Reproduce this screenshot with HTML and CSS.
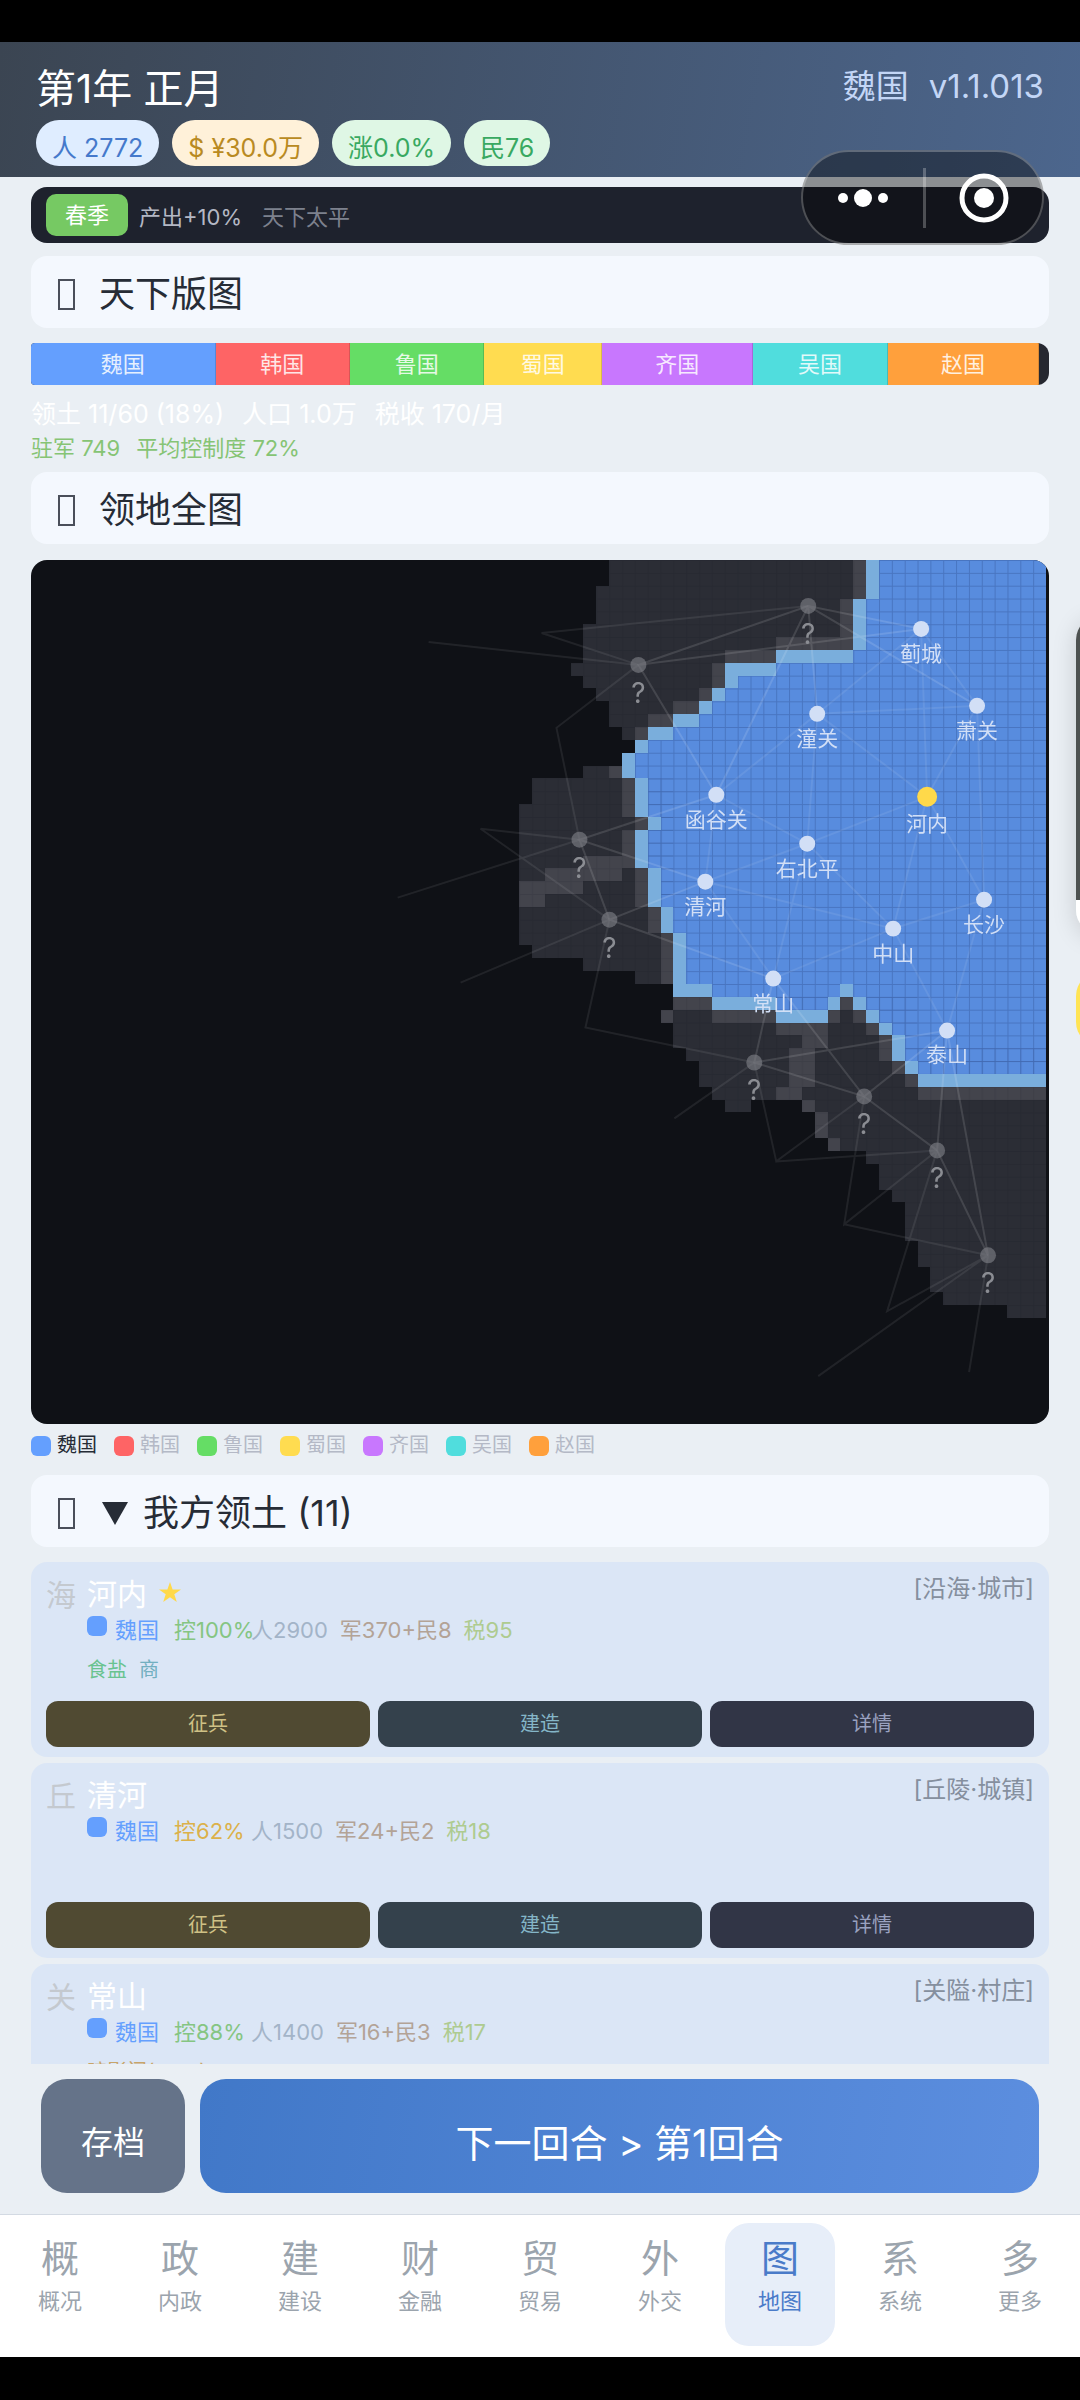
FILE: index.html
```html
<!DOCTYPE html>
<html lang="zh-CN">
<head>
<meta charset="utf-8">
<meta name="viewport" content="width=device-width, initial-scale=1">
<title>天下版图</title>
<link rel="stylesheet" href="styles.css">
</head>
<body>
<div class="app">
  <header class="topbar">
    <div class="topbar-row">
      <h1 class="date">第1年 正月</h1>
      <p class="version"><span>魏国</span><span>v1.1.013</span></p>
    </div>
    <div class="chips">
      <span class="chip chip-blue">人 2772</span>
      <span class="chip chip-gold">$ ¥30.0万</span>
      <span class="chip chip-green">涨0.0%</span>
      <span class="chip chip-green">民76</span>
    </div>
  </header>

  <main class="content">
    <div class="season">
      <span class="season-tag">春季</span>
      <span class="season-effect">产出+10%</span>
      <span class="season-news">天下太平</span>
    </div>

    <h2 class="section-title"><i class="glyph"></i>天下版图</h2>
    <div class="share">
      <span class="share-part s11 wei">魏国</span>
      <span class="share-part s8 han">韩国</span>
      <span class="share-part s8 lu">鲁国</span>
      <span class="share-part s7 shu">蜀国</span>
      <span class="share-part s9 qi">齐国</span>
      <span class="share-part s8 wu">吴国</span>
      <span class="share-part s9 zhao">赵国</span>
    </div>
    <p class="summary"><span>领土 11/60 (18%)</span><span>人口 1.0万</span><span>税收 170/月</span></p>
    <p class="garrison"><span>驻军 749</span><span>平均控制度 72%</span></p>

    <h2 class="section-title"><i class="glyph"></i>领地全图</h2>
    <div class="map">
      <svg class="map-canvas" viewBox="0 0 1016 862" role="img" aria-label="领地全图">
        <defs>
          <path id="fog" d="M45 0H65V2H45zM44 2H65V5H44zM43 5H64V7H43zM43 7H58V8H43zM42 8H54V9H42zM43 9H54V10H43zM44 10H53V11H44zM45 11H52V12H45zM45 12H50V13H45zM46 13H48V14H46zM43 16H46V17H43zM39 17H50V19H39zM38 19H50V30H38zM39 30H50V31H39zM43 31H50V32H43zM47 32H50V33H47zM50 34H69V38H50zM49 35H50V36H49zM51 38H79V39H51zM52 39H79V41H52zM53 41H79V42H53zM54 42H56V43H54zM60 42H79V43H60zM61 43H79V45H61zM62 45H79V46H62zM65 46H79V47H65zM66 47H79V49H66zM67 49H79V50H67zM68 50H79V53H68zM69 53H79V55H69zM70 55H79V57H70zM71 57H79V58H71zM76 58H79V59H76z"/>
          <path id="realm" d="M65 0V3H64V7H58V8H54V10H53V11H52V12H50V13H48V14H47V15H46V17H47V20H48V21H47V24H48V27H49V29H50V34H53V35H58V36H62V35H63V34H64V35H65V36H66V37H67V39H68V40H69V41H79V0z"/>
          <pattern id="grid" width="1" height="1" patternUnits="userSpaceOnUse">
            <path d="M0 0H1V.08H.08V1H0z" fill="#0a1a4a" fill-opacity=".2"/>
          </pattern>
        </defs>
        <g transform="scale(12.861)" shape-rendering="crispEdges">
          <use href="#fog" class="fog"/>
          <path class="fog-edge" d="M64 0H65V3H64zM63 3H64V6H63zM58 6H64V7H58zM54 7H58V8H54zM53 8H54V10H53zM52 10H53V11H52zM50 11H52V12H50zM48 12H50V13H48zM47 13H48V14H47zM45 16H46V17H45zM46 17H47V20H46zM47 20H48V21H47zM46 21H47V24H46zM43 23H46V25H43zM40 24H43V26H40zM38 25H40V27H38zM47 24H48V27H47zM48 27H49V29H48zM49 29H50V33H49zM50 34H53V35H50zM49 35H50V36H49zM53 35H58V36H53zM58 36H62V37H58zM60 37H62V38H60zM59 38H61V41H59zM58 41H60V42H58zM60 42H61V43H60zM61 43H62V45H61zM62 45H63V46H62zM63 34H64V35H63zM62 35H63V36H62zM64 35H65V36H64zM65 36H66V37H65zM66 37H67V39H66zM67 39H68V40H67zM68 40H69V41H68zM69 41H79V42H69z"/>
          <use href="#realm" class="realm"/>
          <use href="#realm" fill="url(#grid)"/>
          <use href="#fog" class="fog-grid" fill="url(#grid)"/>
          <path class="realm-edge" d="M65 0H66V3H65zM64 3H65V7H64zM58 7H64V8H58zM54 8H58V9H54zM54 9H55V10H54zM53 10H54V11H53zM52 11H53V12H52zM50 12H52V13H50zM48 13H50V14H48zM47 14H48V15H47zM46 15H47V17H46zM47 17H48V20H47zM48 20H49V21H48zM47 21H48V24H47zM48 24H49V27H48zM49 27H50V29H49zM50 29H51V34H50zM51 33H53V34H51zM53 34H58V35H53zM58 35H62V36H58zM62 34H63V35H62zM63 33H64V34H63zM64 34H65V35H64zM65 35H66V36H65zM66 36H67V37H66zM67 37H68V39H67zM68 39H69V40H68zM69 40H79V41H69z"/>
        </g>
        <path class="road road-far" d="M511 73L778 46M511 73L608 105M398 82L608 105M608 105L526 168L549 280M549 280L450 269L579 360M367 338L549 280M430 423L579 360M579 360L555 468L724 503M644 559L724 503M724 503L746 602L834 537M746 602L907 591M834 537L814 665L907 591M814 665L958 696M907 591L857 752L958 696L788 817M958 696L939 813"/>
        <path class="road road-near" d="M608 105L778 46L891 69M778 46L947 146M778 46L686 235M778 46L787 154M891 69L608 105L686 235M686 235L549 280L675 322M549 280L579 360L675 322M579 360L743 419M743 419L724 503L834 537L743 419M724 503L917 471L834 537L907 591L917 471L958 696L907 591"/>
        <path class="road road-own" d="M891 69L787 154M891 69L947 146M891 69L897 237M787 154L947 146L897 237L787 154L686 235M787 154L777 284M947 146L954 340M686 235L777 284L897 237L863 369M686 235L675 322L777 284L863 369L675 322L743 419L777 284M897 237L954 340L863 369L743 419M863 369L917 471L954 340"/>
        <g class="unknown">
          <circle cx="778" cy="46" r="8"/><circle cx="608" cy="105" r="8"/><circle cx="549" cy="280" r="8"/><circle cx="579" cy="360" r="8"/><circle cx="724" cy="503" r="8"/><circle cx="834" cy="537" r="8"/><circle cx="907" cy="591" r="8"/><circle cx="958" cy="696" r="8"/>
          <text x="778" y="84">?</text><text x="608" y="143">?</text><text x="549" y="318">?</text><text x="579" y="398">?</text><text x="724" y="541">?</text><text x="834" y="575">?</text><text x="907" y="629">?</text><text x="958" y="734">?</text>
        </g>
        <g class="city">
          <circle cx="891" cy="69" r="8"/><circle cx="787" cy="154" r="8"/><circle cx="947" cy="146" r="8"/><circle cx="686" cy="235" r="8"/><circle class="capital" cx="897" cy="237" r="10"/><circle cx="777" cy="284" r="8"/><circle cx="675" cy="322" r="8"/><circle cx="954" cy="340" r="8"/><circle cx="863" cy="369" r="8"/><circle cx="743" cy="419" r="8"/><circle cx="917" cy="471" r="8"/>
          <text x="891" y="101">蓟城</text><text x="787" y="186">潼关</text><text x="947" y="178">萧关</text><text x="686" y="267">函谷关</text><text x="897" y="271">河内</text><text x="777" y="316">右北平</text><text x="675" y="354">清河</text><text x="954" y="372">长沙</text><text x="863" y="401">中山</text><text x="743" y="451">常山</text><text x="917" y="503">泰山</text>
        </g>
      </svg>
    </div>
    <ul class="legend">
      <li class="legend-item current"><i class="swatch wei"></i>魏国</li>
      <li class="legend-item"><i class="swatch han"></i>韩国</li>
      <li class="legend-item"><i class="swatch lu"></i>鲁国</li>
      <li class="legend-item"><i class="swatch shu"></i>蜀国</li>
      <li class="legend-item"><i class="swatch qi"></i>齐国</li>
      <li class="legend-item"><i class="swatch wu"></i>吴国</li>
      <li class="legend-item"><i class="swatch zhao"></i>赵国</li>
    </ul>

    <h2 class="section-title"><i class="glyph"></i><svg class="caret" viewBox="0 0 26 23" aria-hidden="true"><path d="M0 0H26L13 23z"/></svg>我方领土 (11)</h2>
    <div class="lands">
      <article class="land">
        <span class="terrain">海</span>
        <div class="land-body">
          <div class="land-head"><h3 class="land-name">河内</h3><svg class="star" viewBox="0 0 22 20" aria-hidden="true"><path d="M11 0L13.600 7.600H22L15.300 12.300L17.800 20L11 15.300L4.200 20L6.700 12.300L0 7.600H8.400z"/></svg><span class="land-kind">[沿海·城市]</span></div>
          <p class="stats"><i class="swatch wei"></i><span class="owner">魏国</span><span class="control good">控100%</span><span class="people">人2900</span><span class="army">军370+民8</span><span class="tax">税95</span></p>
          <p class="extras"><span class="goods">食盐</span><span class="trade">商</span></p>
        </div>
        <div class="actions"><button class="act recruit">征兵</button><button class="act build">建造</button><button class="act detail">详情</button></div>
      </article>
      <article class="land">
        <span class="terrain">丘</span>
        <div class="land-body">
          <div class="land-head"><h3 class="land-name">清河</h3><span class="land-kind">[丘陵·城镇]</span></div>
          <p class="stats"><i class="swatch wei"></i><span class="owner">魏国</span><span class="control fair">控62%</span><span class="people">人1500</span><span class="army">军24+民2</span><span class="tax">税18</span></p>
          <p class="extras"></p>
        </div>
        <div class="actions"><button class="act recruit">征兵</button><button class="act build">建造</button><button class="act detail">详情</button></div>
      </article>
      <article class="land">
        <span class="terrain">关</span>
        <div class="land-body">
          <div class="land-head"><h3 class="land-name">常山</h3><span class="land-kind">[关隘·村庄]</span></div>
          <p class="stats"><i class="swatch wei"></i><span class="owner">魏国</span><span class="control good">控88%</span><span class="people">人1400</span><span class="army">军16+民3</span><span class="tax">税17</span></p>
          <p class="extras"><span class="spy">暗影阁(34%)</span></p>
        </div>
        <div class="actions"><button class="act recruit">征兵</button><button class="act build">建造</button><button class="act detail">详情</button></div>
      </article>
    </div>
  </main>

  <div class="turnbar">
    <button class="save">存档</button>
    <button class="next">下一回合 &gt; 第1回合</button>
  </div>

  <nav class="tabs">
    <a class="tab" href="#overview"><b>概</b><span>概况</span></a>
    <a class="tab" href="#domestic"><b>政</b><span>内政</span></a>
    <a class="tab" href="#build"><b>建</b><span>建设</span></a>
    <a class="tab" href="#finance"><b>财</b><span>金融</span></a>
    <a class="tab" href="#trade"><b>贸</b><span>贸易</span></a>
    <a class="tab" href="#diplomacy"><b>外</b><span>外交</span></a>
    <a class="tab active" href="#map" aria-current="page"><b>图</b><span>地图</span></a>
    <a class="tab" href="#system"><b>系</b><span>系统</span></a>
    <a class="tab" href="#more"><b>多</b><span>更多</span></a>
  </nav>

  <div class="capsule">
    <button class="capsule-btn" aria-label="更多"><svg width="50" height="18" viewBox="0 0 50 18"><circle cx="5" cy="9" r="5"/><circle cx="25" cy="9" r="9"/><circle cx="45" cy="9" r="5"/></svg></button>
    <button class="capsule-btn" aria-label="关闭"><svg width="50" height="50" viewBox="0 0 50 50"><circle class="ring" cx="25" cy="25" r="22"/><circle cx="25" cy="25" r="10"/></svg></button>
  </div>
  <div class="drawer"></div>
  <div class="drawer-key"></div>
</div>
</body>
</html>
```
FILE: styles.css
```css
* { box-sizing: border-box; margin: 0; padding: 0; }

body {
  background: #000;
  font-family: Inter, "Noto Sans CJK SC", sans-serif;
  font-size: 23px;
  font-weight: 400;
  color: #262c36;
}

h1, h2, h3, b { font-weight: 400; }
ul { list-style: none; }
i { font-style: normal; }
button { border: 0; font: inherit; cursor: pointer; }
a { color: inherit; text-decoration: none; }

.wei { background: #649ffe; }
.han { background: #fe6465; }
.lu { background: #65dd65; }
.shu { background: #ffdc50; }
.qi { background: #c877fe; }
.wu { background: #50dddd; }
.zhao { background: #ffa03c; }

.app {
  position: relative;
  display: flex;
  flex-direction: column;
  height: 100vh;
  padding: 42px 0 43px;
  overflow: hidden;
}

.topbar {
  flex: none;
  padding: 22px 36px 11px;
  background: linear-gradient(100deg, #3b4552, #4c668d);
}
.topbar-row { display: flex; justify-content: space-between; height: 56px; }
.date { font-size: 40px; line-height: 50px; color: #fff; }
.version { display: flex; gap: 20px; font-size: 33px; line-height: 44px; color: #c3d6f6; }
.chips { display: flex; gap: 13px; }
.chip { height: 46px; padding: 10px 16px 0; border-radius: 23px; font-size: 25px; line-height: 36px; }
.chip-blue { background: #dfedff; color: #4579cb; }
.chip-gold { background: #fff1d9; color: #b98a22; }
.chip-green { background: #dff7e5; color: #39a961; }

.content {
  flex: 1;
  min-height: 0;
  padding: 10px 31px 0;
  overflow-y: auto;
  scrollbar-width: none;
  background: #eaeff4;
}

.season {
  display: flex;
  align-items: center;
  height: 56px;
  margin-bottom: 13px;
  padding: 0 15px;
  border-radius: 16px;
  background: #1e222d;
  font-size: 22px;
  color: #b4b8c4;
}
.season-tag {
  margin-right: 11px;
  padding: 0 19px;
  border-radius: 10px;
  background: #76c963;
  font-size: 22px;
  line-height: 42px;
  color: #fff;
}
.season-effect { margin-right: 20px; }
.season-news { color: #7d818d; }

.section-title {
  display: flex;
  align-items: center;
  height: 72px;
  padding: 4px 27px 0;
  border-radius: 16px;
  background: #f4f8fe;
  font-size: 36px;
  line-height: 48px;
}
.glyph { width: 17px; height: 31px; margin-right: 24px; border: 2px solid #4a4f5a; }
.caret { width: 26px; height: 23px; margin: 0 15px 0 3px; fill: #262c36; }

.share {
  display: flex;
  height: 42px;
  margin: 15px 0 12px;
  padding-right: 10px;
  border-radius: 4px 12px 12px 4px;
  background: #262830;
  overflow: hidden;
}
.share-part { border-right: 1px solid rgba(0, 0, 0, .15); font-size: 22px; line-height: 42px; text-align: center; color: rgba(255, 255, 255, .85); }
.s7 { flex: 7; }
.s8 { flex: 8; }
.s9 { flex: 9; }
.s11 { flex: 11; }

.summary { display: flex; gap: 18px; font-size: 25px; line-height: 34px; color: #fff; }
.garrison { display: flex; gap: 16px; margin-bottom: 7px; font-size: 22px; line-height: 34px; color: #86c474; }

.map {
  margin-top: 16px;
  padding: 0 3px 3px 0;
  border-radius: 16px;
  background: #0f1116;
  overflow: hidden;
}
.map-canvas { display: block; width: 100%; height: auto; }
.fog { fill: #2b2d35; }
.fog-edge { fill: #43444c; }
.fog-grid { opacity: .5; mix-blend-mode: multiply; }
.realm { fill: #588cde; }
.realm-edge { fill: #7aaedc; }
.road { fill: none; stroke: #fff; stroke-width: 2; }
.road-far { stroke-opacity: .08; }
.road-near { stroke-opacity: .12; }
.road-own { stroke-opacity: .08; }
.unknown { text-anchor: middle; font-size: 28px; }
.unknown circle { fill: rgba(130, 132, 138, .6); }
.unknown text { fill: #8b8d93; }
.city { fill: #d2dff6; text-anchor: middle; font-size: 21px; }
.city .capital { fill: #ffd94a; }

.legend { display: flex; gap: 17px; margin: 7px 0 15px; font-size: 20px; line-height: 29px; color: #b4b9c6; }
.legend-item { display: flex; align-items: center; gap: 6px; }
.current { color: #262c36; }
.swatch { width: 20px; height: 20px; border-radius: 6px; }

.lands { display: flex; flex-direction: column; gap: 6px; margin-top: 15px; }
.land {
  display: grid;
  grid-template-columns: 30px 1fr;
  grid-template-rows: 123px 46px;
  column-gap: 11px;
  padding: 16px 15px 10px;
  border-radius: 16px;
  background: #dbe6f6;
}
.terrain { font-size: 30px; line-height: 34px; color: #c4c9cf; }
.land-head { display: flex; height: 34px; }
.land-name { font-size: 30px; line-height: 32px; color: #fff; }
.star { width: 22px; height: 20px; margin: 4px 0 0 12px; fill: #ffd94a; }
.land-kind { margin-left: auto; font-size: 24px; line-height: 22px; color: #858f9e; }
.stats { display: flex; height: 36px; gap: 12px; font-size: 22px; line-height: 36px; }
.stats .swatch { margin: 4px -4px 0 0; }
.owner { width: 47px; color: #649ffe; }
.control { width: 65px; white-space: nowrap; }
.good { color: #85c582; }
.fair { color: #dcb14a; }
.people { color: #a3b4c8; }
.army { color: #b3a396; }
.tax { color: #aecb90; }
.extras { display: flex; gap: 12px; font-size: 20px; line-height: 44px; }
.goods { color: #69c390; }
.trade { color: #72afc0; }
.spy { color: #c8a468; }

.actions { grid-column: 1 / -1; display: flex; gap: 8px; }
.act { flex: 1; border-radius: 12px; padding-bottom: 4px; font-size: 20px; }
.recruit { background: #504a32; color: #cfc186; }
.build { background: #34414c; color: #85b6c8; }
.detail { background: #313546; color: #9aa2c0; }

.turnbar {
  flex: none;
  display: flex;
  gap: 15px;
  padding: 15px 41px 21px;
  background: #eaeff4;
}
.turnbar button { height: 114px; border-radius: 26px; padding-top: 8px; color: #fff; }
.save { width: 144px; background: #657389; font-size: 32px; }
.turnbar .next { flex: 1; background: linear-gradient(100deg, #4178c8, #5c8edf); font-size: 38px; }

.tabs {
  flex: none;
  display: flex;
  height: 143px;
  padding: 8px 0 11px;
  border-top: 1px solid #d3dae3;
  background: #fff;
  color: #9ba4ad;
}
.tab {
  flex: 1;
  display: flex;
  flex-direction: column;
  align-items: center;
  margin: 0 5px;
  padding-top: 10px;
  border-radius: 24px;
}
.tab b { font-size: 38px; line-height: 50px; }
.tab span { font-size: 22px; line-height: 36px; }
.active { background: #e7eef9; color: #4a7bc9; }

.capsule {
  position: absolute;
  top: 150px;
  right: 36px;
  display: flex;
  width: 243px;
  height: 95px;
  border: 2px solid rgba(255, 255, 255, .25);
  border-radius: 48px;
  background: rgba(0, 0, 0, .4);
}
.capsule-btn { flex: 1; display: flex; align-items: center; justify-content: center; background: none; }
.capsule-btn + .capsule-btn::before { content: ""; width: 3px; height: 60px; margin-right: auto; background: rgba(255, 255, 255, .25); }
.capsule-btn + .capsule-btn svg { margin-right: auto; }
.capsule svg { fill: #fff; }
.capsule .ring { fill: none; stroke: #fff; stroke-width: 5; }

.drawer, .drawer-key { position: absolute; right: -76px; width: 80px; }
.drawer {
  top: 616px;
  height: 318px;
  border-radius: 24px;
  background: linear-gradient(#4d5150 284px, #fff 284px);
  box-shadow: 0 4px 24px rgba(0, 0, 0, .15);
}
.drawer-key { top: 972px; height: 74px; border-radius: 24px; background: #ffe454; }
```
